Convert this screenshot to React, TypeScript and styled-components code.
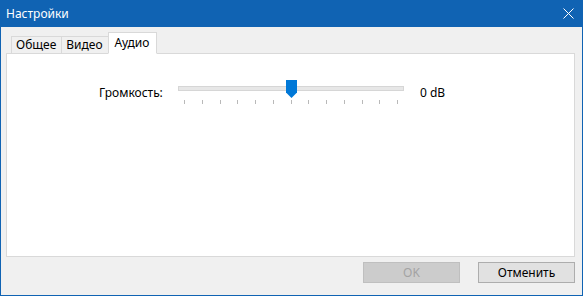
import styled, { createGlobalStyle } from 'styled-components';

const accent = '#1063b3';
const border = '#d9d9d9';
const uiFont = `'Noto Sans', 'Open Sans', sans-serif`;

const GlobalStyle = createGlobalStyle`
  html, body {
    margin: 0;
    padding: 0;
    background: #ffffff;
  }
  body {
    font-family: ${uiFont};
    font-size: 12px;
    overflow: hidden;
  }
`;

const Window = styled.div`
  width: 583px;
  height: 296px;
  box-sizing: border-box;
  border: 1px solid ${accent};
  border-top: none;
  display: flex;
  flex-direction: column;
  background: #f0f0f0;
`;

const TitleBar = styled.div`
  height: 26px;
  flex-shrink: 0;
  background: ${accent};
  display: flex;
  align-items: center;
  justify-content: space-between;
  padding: 0 9px 1px 6px;
  color: #ffffff;
  font-size: 12px;
  margin: 0 -1px;
`;

const CloseButton = styled.div`
  width: 12px;
  height: 12px;
  display: flex;
  align-items: center;
  justify-content: center;
`;

const Body = styled.div`
  flex: 1;
  display: flex;
  flex-direction: column;
  padding: 6px 7px 0 5px;
`;

const TabStrip = styled.div`
  display: flex;
  align-items: flex-end;
  padding-left: 5px;
  height: 21px;
  margin-bottom: -1px;
  position: relative;
  z-index: 1;
`;

const Tab = styled.div<{ $active?: boolean }>`
  box-sizing: border-box;
  height: ${(p) => (p.$active ? '22px' : '18px')};
  padding: ${(p) => (p.$active ? '2px 7px 0 6px' : '0 5px 0 4px')};
  margin: ${(p) => (p.$active ? '0 0 0 -1px' : '0')};
  border: 1px solid ${border};
  border-bottom: ${(p) => (p.$active ? '1px solid #ffffff' : `1px solid ${border}`)};
  border-left: ${(p) => (p.$active ? `1px solid ${border}` : 'none')};
  background: ${(p) => (p.$active ? '#ffffff' : '#f0f0f0')};
  color: #000000;
  line-height: 15px;
  display: flex;
  align-items: flex-start;
  &:first-child {
    border-left: 1px solid ${border};
  }
`;

const Panel = styled.div`
  height: 204px;
  box-sizing: border-box;
  border: 1px solid ${border};
  background: #ffffff;
  padding: 26px 0 0 92px;
`;

const SliderRow = styled.div`
  display: flex;
  align-items: flex-start;
`;

const Label = styled.div`
  width: 79px;
  padding-top: 4px;
  color: #000000;
`;

const Slider = styled.div`
  position: relative;
  width: 226px;
  height: 26px;
`;

const Track = styled.div`
  margin-top: 6px;
  height: 3px;
  background: #e7e7e7;
  border: 1px solid #d6d6d6;
`;

const Ticks = styled.div`
  display: flex;
  justify-content: space-between;
  padding: 0 6px 0 6px;
  margin-top: 9px;
`;

const Tick = styled.div`
  width: 1px;
  height: 4px;
  background: #b9b9b9;
`;

const Thumb = styled.svg`
  position: absolute;
  left: 108px;
  top: 0;
`;

const Value = styled.div`
  padding: 4px 0 0 16px;
  color: #000000;
`;

const Footer = styled.div`
  flex: 1;
  display: flex;
  justify-content: flex-end;
  align-items: flex-start;
  gap: 18px;
  padding-top: 5px;
`;

const Button = styled.div<{ $disabled?: boolean }>`
  box-sizing: border-box;
  width: 97px;
  height: 21px;
  display: flex;
  align-items: center;
  justify-content: center;
  border: 1px solid ${(p) => (p.$disabled ? '#bfbfbf' : '#adadad')};
  background: ${(p) => (p.$disabled ? '#cccccc' : '#e1e1e1')};
  color: ${(p) => (p.$disabled ? '#a3a3a3' : '#000000')};
  padding-bottom: 1px;
`;

export default function App() {
  const ticks = Array.from({ length: 13 });
  return (
    <>
      <GlobalStyle />
      <Window>
        <TitleBar>
          <span>Настройки</span>
          <CloseButton>
            <svg width="11" height="11" viewBox="0 0 11 11">
              <path d="M0.5 0.5 L10.5 10.5 M10.5 0.5 L0.5 10.5" stroke="#ffffff" strokeWidth="1" fill="none" />
            </svg>
          </CloseButton>
        </TitleBar>
        <Body>
          <TabStrip>
            <Tab>Общее</Tab>
            <Tab>Видео</Tab>
            <Tab $active>Аудио</Tab>
          </TabStrip>
          <Panel>
            <SliderRow>
              <Label>Громкость:</Label>
              <Slider>
                <Track />
                <Ticks>
                  {ticks.map((_, i) => (
                    <Tick key={i} />
                  ))}
                </Ticks>
                <Thumb width="11" height="18" viewBox="0 0 11 18">
                  <path d="M0 0 H11 V12.5 L5.5 18 L0 12.5 Z" fill="#0078d7" />
                </Thumb>
              </Slider>
              <Value>0 dB</Value>
            </SliderRow>
          </Panel>
          <Footer>
            <Button $disabled>OK</Button>
            <Button>Отменить</Button>
          </Footer>
        </Body>
      </Window>
    </>
  );
}
